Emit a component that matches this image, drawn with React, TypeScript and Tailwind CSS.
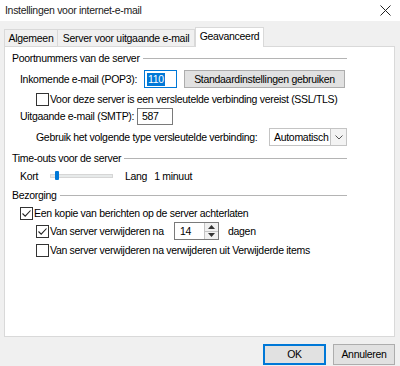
import React from "react";

function Checkbox({ checked }: { checked?: boolean }) {
  return (
    <span className="w-[13px] h-[13px] border border-[#333333] bg-white flex items-center justify-center shrink-0">
      {checked && (
        <svg width="11" height="11" viewBox="0 0 11 11">
          <path d="M1.5 5.5 L4.2 8.2 L9.5 2.5" fill="none" stroke="#222" strokeWidth="1.1" />
        </svg>
      )}
    </span>
  );
}

function CheckRow({ checked, label, indent }: { checked?: boolean; label: string; indent: string }) {
  return (
    <div className={`flex items-center h-4 ${indent}`}>
      <Checkbox checked={checked} />
      <span className="ml-px">{label}</span>
    </div>
  );
}

function SectionHeader({ title }: { title: string }) {
  return (
    <div className="flex items-center h-4">
      <span>{title}</span>
      <span className="flex-1 h-px bg-[#b4b4b4] ml-[3px]" />
    </div>
  );
}

export default function App() {
  return (
    <div
      className="w-[400px] h-[366px] bg-[#f0f0f0] text-[10.5px] tracking-[-0.3px] text-[#000] leading-none overflow-hidden flex flex-col whitespace-nowrap"
      style={{ fontFamily: '"Liberation Sans", Arial, sans-serif' }}
    >
      {/* Title bar */}
      <div className="h-[21px] bg-white flex items-center justify-between pl-[5px] pr-[9px] shrink-0">
        <span className="text-[#1a1a1a]">Instellingen voor internet-e-mail</span>
        <svg width="11" height="11" viewBox="0 0 11 11">
          <path d="M0.5 0.5 L10.5 10.5 M10.5 0.5 L0.5 10.5" stroke="#222" strokeWidth="1" />
        </svg>
      </div>

      {/* Tabs */}
      <div className="flex items-end pl-[4px] h-[25px] shrink-0">
        <div className="w-[54px] h-[17px] border border-b-0 border-[#d9d9d9] bg-[#f0f0f0] flex items-center justify-center">
          Algemeen
        </div>
        <div className="w-[137px] h-[17px] border border-l-0 border-b-0 border-[#d9d9d9] bg-[#f0f0f0] flex items-center justify-center">
          Server voor uitgaande e-mail
        </div>
        <div className="w-[69px] h-[20px] border border-b-0 border-[#d9d9d9] bg-white flex items-center justify-center -mb-px relative z-10 pb-[2px]">
          Geavanceerd
        </div>
      </div>

      {/* Panel */}
      <div className="ml-[4px] w-[391px] h-[291px] bg-white border border-[#d9d9d9] pl-[7px] pt-[3px] shrink-0">
        <div className="w-[335px] flex flex-col">
          <SectionHeader title="Poortnummers van de server" />

          <div className="flex items-center h-[18px] mt-[4px] pl-[8px]">
            <span className="w-[124px]">Inkomende e-mail (POP3):</span>
            <span className="w-[33px] h-[18px] border border-[#0078d7] flex items-center pl-[2px]">
              <span className="bg-[#0078d7] text-white px-px h-[13px] flex items-center">110</span>
            </span>
            <span className="ml-[7px] w-[161px] h-[18px] bg-[#e1e1e1] border border-[#adadad] flex items-center justify-center">
              Standaardinstellingen gebruiken
            </span>
          </div>

          <div className="mt-[3px]">
            <CheckRow indent="pl-[24px]" label="Voor deze server is een versleutelde verbinding vereist (SSL/TLS)" />
          </div>

          <div className="flex items-center h-[17px] mt-[1px] pl-[8px]">
            <span className="w-[117px]">Uitgaande e-mail (SMTP):</span>
            <span className="w-[36px] h-[17px] border border-[#7a7a7a] flex items-center pl-[4px]">587</span>
          </div>

          <div className="flex items-center h-[18px] mt-[3px] pl-[24px]">
            <span className="w-[233px]">Gebruik het volgende type versleutelde verbinding:</span>
            <span className="w-[78px] h-[18px] border border-[#c4c4c4] flex items-center justify-between pl-[4px]">
              <span>Automatisch</span>
              <span className="w-[16px] h-[16px] border-l border-[#c4c4c4] bg-[#f3f3f3] flex items-center justify-center">
                <svg width="8" height="5" viewBox="0 0 8 5">
                  <path d="M0.5 0.5 L4 4 L7.5 0.5" fill="none" stroke="#555" strokeWidth="1" />
                </svg>
              </span>
            </span>
          </div>

          <div className="mt-[4px]">
            <SectionHeader title="Time-outs voor de server" />
          </div>

          <div className="flex items-center h-4 mt-[2px] pl-[8px]">
            <span className="w-[30px]">Kort</span>
            <span className="relative w-[63px] h-[4px] bg-[#e7eaea] border border-[#d6d6d6]">
              <span className="absolute left-[4px] -top-[4px] w-[4px] h-[9px] bg-[#0078d7] rounded-[1px]" />
            </span>
            <span className="ml-[12px]">Lang</span>
            <span className="ml-[7px]">1 minuut</span>
          </div>

          <div className="mt-[3px]">
            <SectionHeader title="Bezorging" />
          </div>

          <div className="mt-[2px]">
            <CheckRow checked indent="pl-[8px]" label="Een kopie van berichten op de server achterlaten" />
          </div>

          <div className="flex items-center h-[18px] mt-[1px] pl-[24px]">
            <Checkbox checked />
            <span className="ml-px w-[124px]">Van server verwijderen na</span>
            <span className="w-[45px] h-[18px] border border-[#7a7a7a] flex items-center justify-between pl-[5px]">
              <span>14</span>
              <span className="w-[14px] h-[16px] flex flex-col border-l border-[#c4c4c4]">
                <span className="flex-1 bg-[#f0f0f0] flex items-center justify-center border-b border-[#c4c4c4]">
                  <svg width="7" height="4" viewBox="0 0 7 4"><path d="M0 4 L3.5 0 L7 4 Z" fill="#333" /></svg>
                </span>
                <span className="flex-1 bg-[#f0f0f0] flex items-center justify-center">
                  <svg width="7" height="4" viewBox="0 0 7 4"><path d="M0 0 L3.5 4 L7 0 Z" fill="#333" /></svg>
                </span>
              </span>
            </span>
            <span className="ml-[9px]">dagen</span>
          </div>

          <div className="mt-[2px]">
            <CheckRow indent="pl-[24px]" label="Van server verwijderen na verwijderen uit Verwijderde items" />
          </div>
        </div>
      </div>

      {/* Footer */}
      <div className="flex justify-end gap-[7px] pr-[5px] mt-[7px]">
        <span className="w-[63px] h-[21px] bg-[#e1e1e1] border-2 border-[#0078d7] flex items-center justify-center">OK</span>
        <span className="w-[62px] h-[21px] bg-[#e1e1e1] border border-[#adadad] flex items-center justify-center">Annuleren</span>
      </div>
    </div>
  );
}
